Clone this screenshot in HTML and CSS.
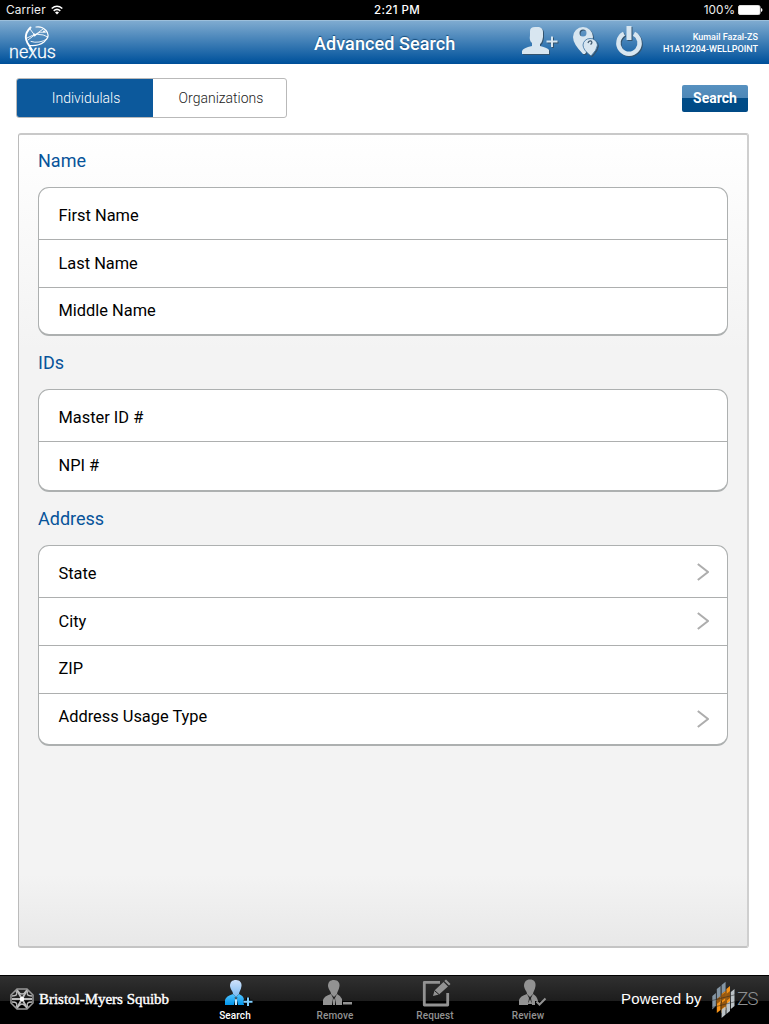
FILE: index.html
```
<!DOCTYPE html>
<html lang="en">
<head>
<meta charset="utf-8">
<title>Advanced Search</title>
<link rel="stylesheet" href="styles.css">
</head>
<body>
<div class="status">
  <div class="carrier"><span>Carrier</span>
    <svg width="12" height="10" viewBox="0 0 12 10" fill="none" stroke="#fff" stroke-width="1.6"><path d="M.7 3.5Q6-1 11.3 3.5M2.7 5.8Q6 3 9.3 5.8"/><path d="M4 7.4Q6 5.8 8 7.4L6 9.5Z" fill="#fff" stroke="none"/></svg>
  </div>
  <div class="clock">2:21 PM</div>
  <div class="power"><span>100%</span>
    <svg width="25" height="10" viewBox="0 0 25 10"><rect x=".5" y=".5" width="21.5" height="9" rx="1.5" fill="#fff" stroke="#ddd"/><path d="M23 3q1.5.4 1.5 2t-1.5 2z" fill="#fff"/></svg>
  </div>
</div>
<header class="header">
  <div class="brand">
    <svg width="26" height="26" viewBox="0 0 26 26" fill="none" stroke="#fff" stroke-linecap="round"><path d="M6.500 1.500Q-1 9 3.500 17L8 24" stroke-width="1.900"/><path d="M5 19.500Q14 20.500 20 16Q27 10 22 4.500Q18 0 12 1" stroke-width="1.200"/><path d="M6 3L10.500 9Q16 5 22 6M3 12Q14 5 24 11M10.500 9L4 14M7 15.500Q15 18 23 13M11 9L19 3" stroke-width=".9"/><circle cx="10.500" cy="9" r="1.400" fill="#fff" stroke="none"/><circle cx="20" cy="5.500" r="1" fill="#fff" stroke="none"/></svg>
    <span>nexus</span>
  </div>
  <h1>Advanced Search</h1>
  <div class="tools">
    <svg class="relief" width="37" height="32" viewBox="0 0 37 32"><path d="M9 5Q9 1 14 1H18Q22 2 22 6V11Q21 17 19 18V20Q27 22 28 24V28H1V25Q2 22 11 20V17Q8 15 9 9Z" fill="#d8e6f0"/><path d="M31 10.500V21M25.500 15.500H36.500" stroke="#d8e6f0" stroke-width="2"/></svg>
    <svg class="relief" width="26" height="32" viewBox="0 0 26 32"><path fill-rule="evenodd" d="M11 1A10 10 0 0 1 21 11Q20 18 13 28H11Q1 18 1 11A10 10 0 0 1 11 1ZM11 3.500A3.500 3.500 0 1 0 11 10.500A3.500 3.500 0 1 0 11 3.500Z" fill="#d8e6f0"/><path d="M18 12.500A7 7 0 0 1 25.500 19Q25 24 19 30Q11 24 11 19A7 7 0 0 1 18 12.500Z" fill="#d8e6f0" stroke="#376f9e" stroke-width=".8"/><path d="M16 17Q16.500 14.500 19 15Q21 16.500 18.500 18.500" fill="none" stroke="#465f75" stroke-width="1.300"/></svg>
    <svg class="relief off" width="28" height="32" viewBox="0 0 28 32"><path d="M9 7.800A10.600 10.600 0 1 0 19 7.800" fill="none" stroke="#d8e6f0" stroke-width="4.400"/><path d="M11.500 0H16.500V14H11.500Z" fill="#d8e6f0"/></svg>
  </div>
  <div class="user"><span class="who">Kumail Fazal-ZS</span><span>H1A12204-WELLPOINT</span></div>
</header>
<div class="toolbar">
  <div class="tabs"><div class="tab on"><span>Individulals</span></div><div class="tab"><span>Organizations</span></div></div>
  <button class="go">Search</button>
</div>
<main class="panel">
  <h2>Name</h2>
  <section class="card">
    <div class="row first"><span>First Name</span></div>
    <div class="row"><span>Last Name</span></div>
    <div class="row last"><span>Middle Name</span></div>
  </section>
  <h2>IDs</h2>
  <section class="card">
    <div class="row first"><span>Master ID #</span></div>
    <div class="row last ids"><span>NPI #</span></div>
  </section>
  <h2>Address</h2>
  <section class="card">
    <div class="row first"><span>State</span><svg class="chev" viewBox="0 0 12 18"><path d="M.8 1L11 9L.8 17"/></svg></div>
    <div class="row"><span>City</span><svg class="chev mid" viewBox="0 0 12 18"><path d="M.8 1L11 9L.8 17"/></svg></div>
    <div class="row zip"><span>ZIP</span></div>
    <div class="row last usage"><span>Address Usage Type</span><svg class="chev low" viewBox="0 0 12 18"><path d="M.8 1L11 9L.8 17"/></svg></div>
  </section>
</main>
<footer class="footer">
  <div class="bms">
    <svg width="24" height="22" viewBox="-12 -11 24 22" fill="none" stroke="#bdbdbd"><path d="M-5-10H5L11-4V4L5 10H-5L-11 4V-4Z" stroke-width="1.500" stroke="#999"/><path d="M0 0L-5-9M0 0L5-9M0 0L5 9M0 0L-5 9M-10 0H10" stroke-width="2"/><path d="M-4-8Q0-2 4-8M-4 8Q0 2 4 8M-10-3Q-3-3-6-8M-10 3Q-3 3-6 8M10-3Q3-3 6-8M10 3Q3 3 6 8" stroke-width="1.300"/><circle r="2.200" fill="#fff" stroke="none"/></svg>
    <span>Bristol-Myers Squibb</span>
  </div>
  <nav class="nav">
    <div class="item search">
      <svg width="30" height="28" viewBox="0 0 30 28"><defs><linearGradient id="hd" x2="0" y2="1"><stop stop-color="#d0e2fb"/><stop offset="1" stop-color="#78b9f2"/></linearGradient><linearGradient id="bd" x2="0" y2="1"><stop stop-color="#53c4ff"/><stop offset="1" stop-color="#0096ed"/></linearGradient></defs><path d="M12 1C16 1 18 4 17.500 7C17 11 15 13 15 15L12 18L9 15C9 12 6.500 11 6 7C6 3 8 1 12 1Z" fill="url(#hd)"/><path d="M9 15L12 18L15 15Q20 17 20 21V26H14L12.800 20L13.500 18.500H10.500L11.200 20L10 26H1V21Q2 17 9 15Z" fill="url(#bd)"/><path d="M12 19L13 21V26H11V21Z" fill="#c6eaff"/><path d="M24 18.500V27M19.500 22.800H28.500" stroke="#000" stroke-width="4"/><path d="M24 18.500V27M19.500 22.800H28.500" stroke="#81cfff" stroke-width="2"/></svg><span>Search</span>
    </div>
    <div class="item remove">
      <svg width="30" height="28" viewBox="0 0 30 28" fill="#929292"><path d="M12 1C16 1 18 4 17.500 7C17 11 15 13 15 15L12 18L9 15C9 12 6.500 11 6 7C6 3 8 1 12 1Z"/><path d="M9 15L11 19L10 26H1V21Q2 17 9 15ZM15 15L13 19L14 26H20V20Q19 17 15 15ZM12 19L13 21V26H11V21ZM21 23H30V25.500H21Z"/></svg><span>Remove</span>
    </div>
    <div class="item request">
      <svg width="30" height="28" viewBox="0 0 30 28" fill="none"><path d="M18 3.300H2.300V26H25.700V14" stroke="#929292" stroke-width="2.800" stroke-linejoin="round"/><path d="M11 17L12.500 11.500L21.500 3L26 7.500L17 15.500ZM22.300 2L24 .5L28.500 5L27 6.500Z" fill="#929292"/><path d="M12.500 11.500L17 15.500" stroke="#1b1b1b" stroke-width="1"/></svg><span>Request</span>
    </div>
    <div class="item review">
      <svg width="30" height="28" viewBox="0 0 30 28" fill="#929292"><path d="M12 .5C16 .5 18 3 17.500 7C17 11 15 13 15 15L12 18L9 15C9 12 6.500 11 6 7C6 3 8 .5 12 .5Z"/><path d="M9 15L11 19L10 26H1V21Q2 17 9 15ZM15 15L13 19L14 26H17V22H20Q19 17 15 15ZM12 20L14 25H10Z"/><path d="M18.500 22.500L21.500 25.500L27.500 19.500" fill="none" stroke="#929292" stroke-width="2"/></svg><span>Review</span>
    </div>
  </nav>
  <div class="powered"><span class="by">Powered by</span>
    <svg width="24" height="38" viewBox="0 0 24 38"><path d="M.3 15L3.900 12V25L.3 28.500ZM4.800 8L8.600 5V22L4.800 25ZM9.600 4L13.600 .8V10L9.600 13Z" fill="#8495a3"/><path d="M4.800 19L8.600 16V29L4.800 32ZM9.600 13L13.600 10V29L9.600 32ZM14.400 8L18 5V24L14.400 27Z" fill="#f79418"/><path d="M4.800 18L8.600 15V20L4.800 23ZM9.600 14L13.600 11V17L9.600 20ZM14.400 13L18 10V17L14.400 20ZM9.600 22L13.600 19V25L9.600 28Z" fill="#98580f"/><path d="M9.600 28.500L13.600 25.500V33.500L9.600 37ZM14.400 23L18 20V30L14.400 33ZM18.800 11L22.500 8V25L18.800 28Z" fill="#bcc3c7"/><path d="M0 19.500L24 13.500M0 26.500L24 20.500" stroke="#222" stroke-width=".5"/></svg>
    <span class="zs">ZS</span>
  </div>
</footer>
</body>
</html>
```
FILE: styles.css
```
* { box-sizing: border-box; }
body { margin: 0; width: 769px; height: 1024px; display: flex; flex-direction: column; background: #fff; font-family: Roboto, "Liberation Sans", sans-serif; overflow: hidden; }
svg { display: block; flex: none; }
span { white-space: nowrap; }
h1, h2 { margin: 0; }
.status { height: 20px; background: #000; color: #eee; display: grid; grid-template-columns: 1fr 60px 1fr; align-items: center; font: 11.8px/20px Inter, sans-serif; padding: 0 6px; }
.carrier, .power { display: flex; align-items: center; gap: 5px; }
.carrier { letter-spacing: .15px; }
.power { justify-content: flex-end; gap: 3px; }
.clock { text-align: center; font-weight: 500; font-size: 11.5px; padding-left: 25px; margin: 0 -20px 0 -20px; color: #fff; letter-spacing: .4px; }
.header { height: 44px; display: flex; background: linear-gradient(#7fabd0, #00529c); border-top: 1px solid #9cbfdb; border-bottom: 1px solid #004f98; color: #fff; }
.brand { width: 304px; padding: 5px 0 0 9px; }
.brand svg { margin-left: 15px; }
.brand span { display: block; font: 300 18px/18px Roboto, sans-serif; margin-top: -9px; letter-spacing: 0; -webkit-text-stroke: .3px #fff; }
.header h1 { width: 161px; padding-left: 10px; font-size: 18px; font-weight: 500; line-height: 45px; letter-spacing: .08px; text-shadow: 0 -1px 1px #164c7c; white-space: nowrap; }
.tools { display: flex; padding: 5px 0 0 56px; gap: 14px; }
.relief { filter: drop-shadow(1px 1px 0 #33536e); }
.off { margin-left: 3px; }
.user { flex: 1; display: flex; flex-direction: column; align-items: flex-end; padding: 10px 11px 0 0; margin-left: -3px; font: 500 9px/12px Roboto, sans-serif; }
.toolbar { height: 69px; display: flex; justify-content: space-between; padding: 14px 21px 0 16px; }
.tabs { width: 271px; height: 40px; display: flex; border: 1px solid #b9b9b9; border-radius: 3px; overflow: hidden; font-size: 14px; line-height: 38px; font-weight: 300; color: #222; }
.tab { flex: 1; text-align: center; padding-left: 3px; }
.on { flex: 0 0 136px; background: #0c599c; color: #fff; padding-left: 2px; }
.go { width: 66px; height: 27px; margin-top: 7px; padding: 0; border: 0; border-radius: 2px; background: linear-gradient(#5791c0, #4d87b7 50%, #004c88 50%, #004a86); color: #fff; font: 700 14px/27px Roboto, sans-serif; }
.panel { margin: 0 20px 0 18px; height: 815px; padding: 2px 19px 0; border: 1px solid #bbb; border-top: 2px solid #c9c9c9; border-right: 2px solid #cfcfcf; border-bottom: 2px solid #c4c4c4; border-radius: 3px; background: linear-gradient(#fff 0, #f3f3f3 215px, #f3f3f3 740px, #e8e8e8 100%); }
.panel h2 { height: 53px; line-height: 53px; font-size: 18px; font-weight: 400; color: #07549a; }
.panel h2:first-child { height: 50px; line-height: 48px; }
.card { width: 690px; border: 1px solid #adb0b0; border-bottom-width: 2px; border-radius: 11px; background: #fff; }
.row { height: 48px; display: flex; justify-content: space-between; border-bottom: 1px solid #adafaf; padding: 0 18px 0 19.500px; line-height: 47px; font-size: 16.400px; color: #000; }
.first { height: 52px; line-height: 55px; }
.last { height: 46px; line-height: 45px; border-bottom: 0; }
.ids { height: 48px; line-height: 47px; }
.zip { line-height: 46px; }
.usage { height: 50px; line-height: 46px; }
.chev { width: 12px; height: 18px; margin-top: 14px; fill: none; stroke: #adadad; stroke-width: 2; }
.first .chev { margin-top: 17px; }
.row .low { margin-top: 16px; }
.footer { margin-top: 27px; height: 49px; display: flex; background: linear-gradient(#303030, #1d1d1d 25px, #000 25px, #000); border-top: 1px solid #000; color: #fff; }
.bms { width: 205px; display: flex; align-items: center; gap: 5px; padding: 0 0 2px 10px; font-family: "Liberation Serif", serif; font-size: 15px; -webkit-text-stroke: .4px #fff; }
.nav { display: flex; }
.item { width: 100px; display: flex; flex-direction: column; font-size: 10px; line-height: 12px; color: #929292; padding-top: 3px; gap: 3px; }
.item svg { margin-left: 19px; }
.item span { width: 60px; text-align: center; font-weight: 500; letter-spacing: .1px; }
.search { color: #fff; }
.remove svg { margin-left: 17px; }
.request svg { margin-left: 17px; }
.review { width: 116px; }
.review svg { margin-left: 13px; }
.powered { display: flex; align-items: center; flex: 1; }
.by { width: 91px; font: 15px/18px "Liberation Sans", sans-serif; letter-spacing: .15px; padding-bottom: 2px; }
.zs { font: 300 19px/20px Roboto, sans-serif; color: #8e9092; margin-left: 1px; padding-bottom: 3px; letter-spacing: -1px; }
.review span { margin-left: -7px; }
.bms span { letter-spacing: -.02px; }
```
